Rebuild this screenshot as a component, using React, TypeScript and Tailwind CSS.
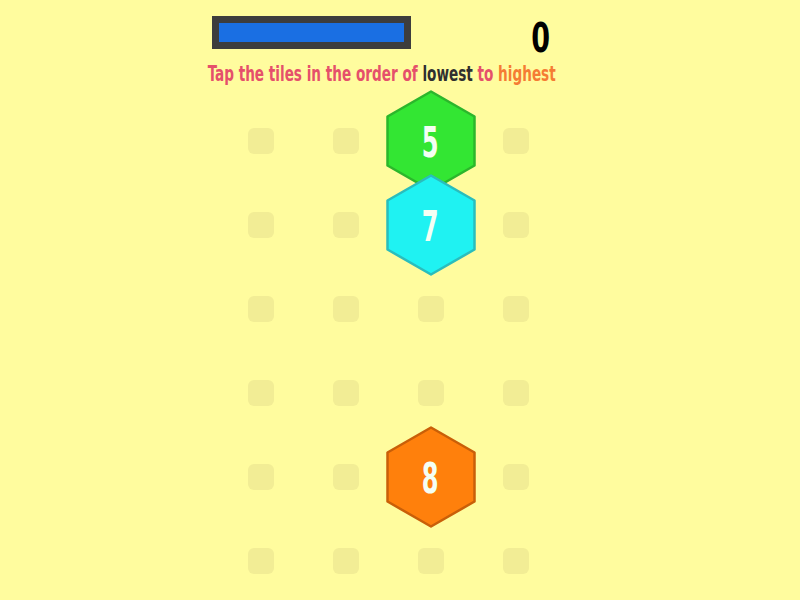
import React from 'react'

const font = { fontFamily: "'DejaVu Sans Condensed', 'DejaVu Sans', sans-serif" }

type Tile = { value: number; fill: string; stroke: string }

// tiles placed on the board, keyed by "row-col"
const tiles: Record<string, Tile> = {
  '0-2': { value: 5, fill: '#33e633', stroke: '#2cb62c' },
  '1-2': { value: 7, fill: '#1ff2f2', stroke: '#2abdbd' },
  '4-2': { value: 8, fill: '#ff800c', stroke: '#c95f08' },
}

function Hexagon({ tile }: { tile: Tile }) {
  return (
    <div className="absolute left-1/2 top-1/2 -translate-x-1/2 -translate-y-1/2 w-[90px] h-[102px] flex items-center justify-center">
      <svg className="absolute inset-0" width="90" height="102" viewBox="0 0 90 102">
        <polygon
          points="45,1.5 88.5,26.5 88.5,75.5 45,100.5 1.5,75.5 1.5,26.5"
          fill={tile.fill}
          stroke={tile.stroke}
          strokeWidth="2.5"
          strokeLinejoin="round"
        />
      </svg>
      <span
        className="relative text-[#f4fff4] font-bold text-[42px] leading-none inline-block scale-x-[0.64] mt-[4px]"
        style={font}
      >
        {tile.value}
      </span>
    </div>
  )
}

export default function App() {
  const rows = [0, 1, 2, 3, 4, 5]
  const cols = [0, 1, 2, 3]

  return (
    <div className="w-[800px] h-[600px] bg-[#fffc9e] overflow-hidden">
      <div className="flex items-start w-[338px] h-[40px] ml-[212px] mt-[16px]">
        <div className="w-[199px] h-[33px] bg-[#3d3d3d] p-[7px]">
          <div className="w-full h-full bg-[#1a6fe3]" />
        </div>
        <div className="flex-1 flex justify-end pt-[2px]">
          <span className="text-black font-bold text-[40px] leading-none inline-block scale-x-[0.75] origin-right" style={font}>
            0
          </span>
        </div>
      </div>

      <div className="w-[348px] ml-[208px] mt-[8px] flex justify-center">
        <p
          className="whitespace-nowrap font-bold text-[21px] leading-none inline-block scale-x-[0.72] text-[#e5506b]"
          style={font}
        >
          Tap the tiles in the order of <span className="text-[#2f2f2f]">lowest</span> to{' '}
          <span className="text-[#f57c34]">highest</span>
        </p>
      </div>

      <div className="grid grid-cols-[repeat(4,85px)] grid-rows-[repeat(6,84px)] ml-[218px] mt-[14px]">
        {rows.map((r) =>
          cols.map((c) => {
            const tile = tiles[`${r}-${c}`]
            return (
              <div key={`${r}-${c}`} className="relative flex items-center justify-center">
                {tile ? (
                  <Hexagon tile={tile} />
                ) : (
                  <div className="w-[26px] h-[26px] rounded-[6px] bg-[#f2ed95]" />
                )}
              </div>
            )
          })
        )}
      </div>
    </div>
  )
}
